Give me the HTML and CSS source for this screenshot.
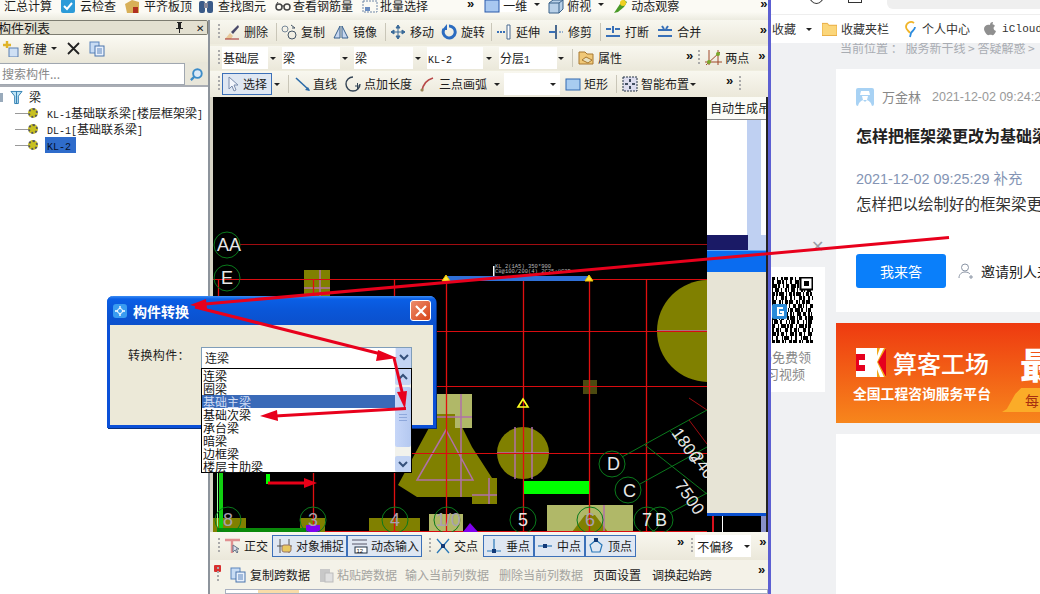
FILE: index.html
```html
<!DOCTYPE html>
<html lang="zh-CN">
<head>
<meta charset="utf-8">
<title>构件转换</title>
<link rel="stylesheet" href="styles.css">
</head>
<body>
<div class="page">
  <div class="app">
    <div class="menubar">
      <span class="mi a1">汇总计算</span>
      <span class="mi a2"><svg viewBox="0 0 16 16"><rect x="1" y="1" width="14" height="14" rx="2" fill="#2c9bd8"/><path d="M4 8l3 3 5-6" stroke="#fff" stroke-width="2" fill="none"/></svg>云检查</span>
      <span class="mi a3"><svg viewBox="0 0 16 16"><path d="M1 6l7-4 7 2v11H3z" fill="#d8b058"/><rect x="9" y="9" width="5" height="6" fill="#b03020"/></svg>平齐板顶</span>
      <span class="mi a3b"><svg viewBox="0 0 16 16"><rect x="1" y="3" width="6" height="12" rx="2" fill="#3a5a88"/><rect x="9" y="3" width="6" height="12" rx="2" fill="#3a5a88"/><rect x="6" y="5" width="4" height="5" fill="#889"/></svg>查找图元</span>
      <span class="mi a4"><svg viewBox="0 0 16 16"><circle cx="4" cy="9" r="3" fill="none" stroke="#444" stroke-width="1.5"/><circle cx="12" cy="9" r="3" fill="none" stroke="#444" stroke-width="1.5"/><path d="M7 8h2M1 7l2-3" stroke="#444"/></svg>查看钢筋量</span>
      <span class="mi a5"><svg viewBox="0 0 16 16"><path d="M1 3h14v11H1z" fill="none" stroke="#7088a8" stroke-dasharray="2 1"/><rect x="3" y="9" width="5" height="4" fill="#6a8cc0"/></svg>批量选择</span>
      <span class="mi more a6">»</span>
      <span class="mi a7 combo-top"><svg viewBox="0 0 16 16"><rect x="1" y="2" width="14" height="12" fill="#a8c8f0" stroke="#2858a8"/></svg>一维</span>
      <span class="caret a8"></span>
      <span class="mi a9"><svg viewBox="0 0 16 16"><path d="M1 5l4-3h10v9l-4 4H1z" fill="#b8d0e8" stroke="#386088"/><path d="M1 5h10v10M11 5l4-3" stroke="#386088" fill="none"/></svg>俯视</span>
      <span class="caret a10"></span>
      <span class="mi a11"><svg viewBox="0 0 16 16"><path d="M2 15L8 6l4-4 3 2-3 5-6 5z" fill="#4a9a28"/><circle cx="11" cy="5" r="3" fill="#f0d020"/></svg>动态观察</span>
      <span class="mi more a12">»</span>
    </div>
    <div class="work">
      <aside class="side">
        <div class="side-head"><span class="side-title">构件列表</span><span class="pin"><svg viewBox="0 0 9 11"><path d="M2 0h5v1H6v5h2v1H5v4H4V7H1V6h2V1H2z" fill="#222"/></svg></span><span class="x">✕</span></div>
        <div class="side-tools">
          <svg class="i16" viewBox="0 0 16 16"><rect x="6" y="7" width="9" height="9" fill="#cfe0f4" stroke="#5a7fb0"/><path d="M4 0v7M0 4h8" stroke="#e0b428" stroke-width="2.4"/></svg>
          <span class="new">新建</span><span class="caret"></span>
          <svg class="del" viewBox="0 0 13 13"><path d="M1 1l11 11M12 1L1 12" stroke="#222" stroke-width="1.8"/></svg>
          <svg class="i16" viewBox="0 0 16 16"><rect x="1" y="1" width="9" height="11" fill="#c8dcf4" stroke="#5a84bc"/><rect x="6" y="5" width="9" height="10" fill="#e8f0fc" stroke="#4a74ac"/><path d="M8 8h5M8 10h5M8 12h5" stroke="#5a84bc"/></svg>
        </div>
        <div class="search">
          <div class="search-input">搜索构件...</div>
          <div class="search-btn"><svg viewBox="0 0 16 16"><circle cx="9" cy="7" r="4.6" fill="#dbeaf8" stroke="#3c8cc8" stroke-width="2"/><path d="M5.5 10.5L2 14" stroke="#3c8cc8" stroke-width="2.4"/></svg></div>
        </div>
        <ul class="tree">
          <li class="root"><span class="expander"></span><svg viewBox="0 0 14 15"><path d="M1 1h12L9 6v8H5V6z" fill="#bfe4f4" stroke="#2c7cb0"/><path d="M7 1v13" stroke="#2c7cb0"/></svg>梁</li>
          <li class="leaf"><span class="gear"></span><span class="lab"><span class="m">KL-1</span>基础联系梁<span class="m">[</span>楼层框架梁<span class="m">]</span></span></li>
          <li class="leaf"><span class="gear"></span><span class="lab"><span class="m">DL-1[</span>基础联系梁<span class="m">]</span></span></li>
          <li class="leaf"><span class="gear"></span><span class="lab sel"><span class="m">KL-2</span></span></li>
        </ul>
      </aside>
      <main class="main">
        <div class="tb r1">
          <span class="grip"></span>
          <span class="tool"><svg viewBox="0 0 16 16"><path d="M1 15l5-6 3 3-2 3z" fill="#e8c898"/><path d="M7 8l7-7 1 2-6 7z" fill="#484868"/><path d="M1 15h14" stroke="#a02828"/></svg>删除</span>
          <span class="sep"></span>
          <span class="tool"><svg viewBox="0 0 16 16"><circle cx="4" cy="5" r="3" fill="none" stroke="#789"/><circle cx="11" cy="11" r="4" fill="none" stroke="#456"/><path d="M10 1l4 3M14 4h-3" stroke="#456" fill="none"/></svg>复制</span>
          <span class="tool"><svg viewBox="0 0 16 16"><path d="M7 2L1 14h6zM9 2l6 12H9z" fill="#c8d8f0" stroke="#38608c"/></svg>镜像</span>
          <span class="sep"></span>
          <span class="tool"><svg viewBox="0 0 16 16"><path d="M8 1v14M1 8h14M8 1L6 4h4zM8 15l-2-3h4zM1 8l3-2v4zM15 8l-3-2v4z" fill="#3a6a98" stroke="#3a6a98"/></svg>移动</span>
          <span class="tool t7"><svg viewBox="0 0 16 16"><path d="M8 2a6 6 0 1 1-5 3" fill="none" stroke="#2c6cc0" stroke-width="3"/><path d="M6 0v6H1z" fill="#2c6cc0"/></svg>旋转</span>
          <span class="sep"></span>
          <span class="tool"><svg viewBox="0 0 16 16"><path d="M1 8h8" stroke="#3870b8" stroke-dasharray="2 1" stroke-width="2"/><path d="M11 1h3v14h-3z" fill="#fff" stroke="#4a6a90"/></svg>延伸</span>
          <span class="tool"><svg viewBox="0 0 16 16"><path d="M1 8h7" stroke="#3870b8" stroke-width="2"/><path d="M8 1v14" stroke="#4a6a90" stroke-width="2"/><path d="M11 8h4" stroke="#3870b8" stroke-dasharray="2 1"/></svg>修剪</span>
          <span class="sep"></span>
          <span class="tool"><svg viewBox="0 0 16 16"><path d="M1 5h5M10 5h5M1 12h14M8 2v7" stroke="#3870b8" stroke-width="2" fill="none"/></svg>打断</span>
          <span class="tool"><svg viewBox="0 0 16 16"><path d="M1 6h14M1 12h14M5 2l2 3M11 2L9 5" stroke="#3870b8" stroke-width="2" fill="none"/></svg>合并</span>
          <span class="more push">»</span>
        </div>
        <div class="tb r2">
          <span class="grip"></span>
          <span class="combo w46">基础层</span><span class="caret c2"></span>
          <span class="combo w58">梁</span><span class="caret c2"></span>
          <span class="combo w59">梁</span><span class="caret c2"></span>
          <span class="combo w56b"><span class="m">KL-2</span></span><span class="caret c3"></span>
          <span class="combo w58">分层<span class="m">1</span></span><span class="caret c3b"></span>
          <span class="sep s2"></span>
          <span class="tool t2"><svg viewBox="0 0 17 16"><path d="M1 2h6l2 2h6v10H1z" fill="#f0c878" stroke="#a87830"/><path d="M4 10l4-3 6 3-4 3z" fill="#e8e0c0" stroke="#a87830"/></svg>属性</span>
          <span class="more m1">»</span>
          <span class="grip g2"></span>
          <span class="tool t2"><svg viewBox="0 0 17 16"><path d="M4 0v15M13 0v15M0 12h17M1 15L15 2" stroke="#a04828" fill="none"/><circle cx="4" cy="12" r="2" fill="#78a828"/><circle cx="13" cy="4" r="2" fill="#78a828"/></svg>两点</span>
          <span class="more m2">»</span>
        </div>
        <div class="tb r3">
          <span class="grip"></span>
          <span class="btn on sel-btn"><svg viewBox="0 0 10 16"><path d="M1 1v12l3-3 2 5 2-1-2-5h4z" fill="#f4f6fc" stroke="#7a8cac"/></svg>选择</span><span class="caret c4"></span>
          <span class="sep s3"></span>
          <span class="tool t3"><svg viewBox="0 0 16 16"><path d="M1 2l13 12" stroke="#2a6aa8" stroke-width="1.6"/><path d="M15 15l-5-1 3-3z" fill="#2a6aa8"/></svg>直线</span>
          <span class="tool t4"><svg viewBox="0 0 16 16"><path d="M8 1a7 7 0 1 0 7 7" fill="none" stroke="#345" stroke-width="1.4"/><path d="M10 10h5M12.500 7v6" stroke="#345"/></svg>点加长度</span>
          <span class="tool t5"><svg viewBox="0 0 14 16"><path d="M2 15C3 8 6 4 13 2" fill="none" stroke="#b84848" stroke-width="1.8"/><circle cx="2" cy="14" r="1.600" fill="#985"/></svg>三点画弧</span>
          <span class="caret c5"></span>
          <span class="combo w56"></span><span class="caret c6"></span>
          <span class="tool t6"><svg viewBox="0 0 16 16"><rect x="1" y="3" width="14" height="11" fill="#a8ccf0" stroke="#3068b0"/></svg>矩形</span>
          <span class="sep s4"></span>
          <span class="tool t6b"><svg viewBox="0 0 16 16"><rect x="1" y="1" width="14" height="14" fill="#dde" stroke="#234" stroke-dasharray="2 1"/><path d="M8 3v3M8 10v3M3 8h3M10 8h3" stroke="#123" stroke-width="1.6"/></svg>智能布置</span>
          <span class="caret c7"></span>
          <span class="more m3">»</span>
          <span class="grip g3"></span>
        </div>
        <div class="stage">
          <svg class="cad" viewBox="213 97 494 435" xmlns="http://www.w3.org/2000/svg">
            <rect x="213" y="97" width="494" height="435" fill="#000"/>
            <g class="olive">
              <rect x="304" y="270" width="26" height="26"/>
              <circle cx="708" cy="331" r="51"/>
              <circle cx="523" cy="453" r="26"/>
              <path d="M398 485l39-72h18l17 34 20 31-20 19h-55z"/>
              <rect x="472" y="478" width="25" height="26"/>
              <rect x="369" y="518" width="51" height="14"/>
              <rect x="213" y="518" width="33" height="14"/>
              <rect x="300" y="518" width="25" height="14"/>
            </g>
            <rect x="583" y="380" width="14" height="14" fill="#4c4a10"/>
            <g class="pale">
              <rect x="436" y="394" width="36" height="20"/>
              <rect x="455" y="413" width="17" height="15"/>
              <rect x="429" y="514" width="34" height="18"/>
              <rect x="547" y="505" width="86" height="27"/>
            </g>
            <path d="M572 532l13-17h10l13 17z" fill="#808000"/>
            <g class="pink">
              <path d="M304 288h26M320 270v26M657 331h50M515 427v52M532 427v52M497 453h52"/>
              <path d="M446 430l-29 50h56zM461 394v103M437 417h35M489 478v26M472 495h25M604 505v27"/>
            </g>
            <g class="grid-red">
              <path d="M240 244.500h467" class="dim"/>
              <path d="M213 279.500h494M437 331.500h270M437 386.500h270M410 453.500h297M325 531.500h382"/>
              <path class="vert" d="M218.500 279v18M313.500 279v18M394.500 279v18M446.500 279v253M523.500 279v253M589.500 279v253M646.500 279v253M313.500 470v62M394.500 470v62"/>
              <path d="M707 410l-18-12M689 420l18 24" class="dim"/>
            </g>
            <rect x="447" y="276" width="142" height="5" fill="#2f70d8"/>
            <rect x="493" y="266" width="1.500" height="10" fill="#fff"/>
            <text class="tiny" x="495" y="268">KL 2(1A5) 350*900</text>
            <text class="tiny" x="495" y="273">C8@100/200(4) 2C25;8C25</text>
            <path d="M446 275l4 6h-8zM589 275l4 6h-8z" fill="#ffe838" stroke="#f0c000"/>
            <path d="M523 399l5 8h-10z" fill="none" stroke="#ffff20" stroke-width="1.600"/>
            <rect x="524" y="481" width="65" height="13" fill="#00ff00"/>
            <rect x="217" y="470" width="1" height="62" fill="#a0ffa0"/>
            <rect x="219" y="470" width="4" height="62" fill="#10d010"/>
            <rect x="217" y="528" width="90" height="4" fill="#0a8a0a"/>
            <rect x="266" y="474" width="4" height="10" fill="#00ff00"/>
            <path d="M268 481.500h36v-3.500l13 5-13 5v-3.500h-36z" fill="#e80018"/>
            <rect x="306" y="525" width="14" height="7" fill="#8000f0"/>
            <path d="M463 532l7-9 8 9z" fill="#8000f0"/>
            <g class="axis">
              <circle cx="227" cy="245" r="13"/><circle cx="227" cy="278" r="13"/>
              <circle cx="228" cy="520" r="13"/><circle cx="313" cy="520" r="13"/>
              <circle cx="395" cy="520" r="13"/><circle cx="447" cy="520" r="13"/>
              <circle cx="523" cy="520" r="13"/><circle cx="590" cy="520" r="13"/>
              <circle cx="647" cy="520" r="13"/><circle cx="660" cy="520" r="13"/>
              <circle cx="612" cy="464" r="13"/><circle cx="628" cy="490" r="13"/>
              <path d="M622 457l85-47M640 484l67-37M670 513l37-20M645 445l62 49M670 431l37 34"/>
            </g>
            <g class="ax-txt">
              <text x="217" y="251">AA</text><text x="221" y="284">E</text>
              <text x="607" y="470">D</text><text x="623" y="497">C</text>
              <text x="518" y="526">5</text><text x="655" y="526">B</text><text x="642" y="526">7</text>
            </g>
            <g class="ax-txt dimmed">
              <text x="223" y="526">8</text><text x="308" y="526">3</text><text x="390" y="526">4</text>
              <text x="436" y="526">1/0</text><text x="585" y="526">6</text>
            </g>
            <g class="ax-txt rot">
              <text transform="translate(671 433) rotate(55)">1800</text>
              <text transform="translate(690 457) rotate(55)">2400</text>
              <text transform="translate(674 485) rotate(55)">7500</text>
            </g>
          </svg>
          <div class="dock">
            <div class="dock-head">自动生成吊</div>
            <div class="dock-list"><div class="dock-scroll"></div></div>
            <div class="dock-navy"></div>
            <div class="dock-title"></div>
            <div class="dock-body"></div>
            <div class="dock-foot"></div>
          </div>
        </div>
        <div class="tb r4">
          <span class="grip"></span>
          <span class="tool t8"><svg viewBox="0 0 17 16"><path d="M1 2h15M8 2v13" stroke="#e09090" stroke-width="2.4"/><path d="M9 7v7l2-2 2 3 1-1-2-3h3z" fill="#dde" stroke="#678"/></svg>正交</span>
          <span class="btn on b75"><svg viewBox="0 0 17 16"><path d="M4 1v14M13 1v14M1 8h15" stroke="#555" fill="none"/><rect x="6" y="7" width="9" height="7" rx="2" fill="#e8c860" stroke="#976"/></svg>对象捕捉</span>
          <span class="btn on b75"><svg viewBox="0 0 17 16"><path d="M1 2h15M1 6h15" stroke="#556"/><rect x="4" y="9" width="12" height="6" fill="#fff" stroke="#234"/><text x="5.500" y="14.500" class="mini">12</text></svg>动态输入</span>
          <span class="grip g4"></span>
          <span class="tool t9"><svg viewBox="0 0 16 16"><path d="M2 1l12 14M14 1L2 15" stroke="#2a78b8" stroke-width="1.3"/><rect x="6" y="6" width="4" height="4" fill="#123a78"/></svg>交点</span>
          <span class="btn on b51"><svg viewBox="0 0 16 16"><path d="M1 13h14M8 1v12" stroke="#2a78b8" stroke-width="1.200"/><rect x="6" y="11" width="4" height="4" fill="#123a78"/></svg>垂点</span>
          <span class="btn on b51"><svg viewBox="0 0 16 16"><path d="M1 8h14" stroke="#2a78b8" stroke-width="1.200"/><rect x="6" y="6" width="4" height="4" fill="#123a78"/></svg>中点</span>
          <span class="btn on b51"><svg viewBox="0 0 16 16"><path d="M8 2l6 5-2 7H4L2 7z" fill="none" stroke="#2a78b8" stroke-width="1.200"/><rect x="6" y="0" width="4" height="4" fill="#123a78"/></svg>顶点</span>
          <span class="more m4">»</span>
          <span class="grip g5"></span>
          <span class="combo w56c">不偏移<span class="caret c8"></span></span>
          <span class="more m5">»</span>
        </div>
        <div class="bottom">
          <div class="bt">
            <span class="close-mini"></span>
            <span class="grip g6"></span>
            <span class="tool t10"><svg viewBox="0 0 16 16"><rect x="1" y="1" width="9" height="11" fill="#c8dcf4" stroke="#5a84bc"/><rect x="6" y="5" width="9" height="10" fill="#e8f0fc" stroke="#4a74ac"/><path d="M8 8h5M8 10h5M8 12h5" stroke="#5a84bc"/></svg>复制跨数据</span>
            <span class="tool off t11"><svg viewBox="0 0 16 16"><rect x="2" y="2" width="10" height="13" fill="#c8c8c8"/><rect x="7" y="6" width="8" height="9" fill="#e0e0e0" stroke="#bbb"/></svg>粘贴跨数据</span>
            <span class="tool off t12">输入当前列数据</span>
            <span class="tool off t12">删除当前列数据</span>
            <span class="tool t12c">页面设置</span>
            <span class="tool t12b">调换起始跨</span>
            <span class="more m6">»</span>
          </div>
          <div class="sheet"><span class="sheet-cell"></span></div>
        </div>
      </main>
    </div>
  </div>
  <div class="divider"></div>
  <section class="browser">
    <div class="chrome">
      <span class="round"></span><span class="square"></span><span class="tabstrip"></span>
    </div>
    <div class="bookmarks">
      <span class="bm b1">收藏</span><span class="caret c9"></span>
      <span class="bm b2"><svg viewBox="0 0 16 14"><path d="M0 1h6l1 2h9v11H0z" fill="#fbd67a" stroke="#e8a838"/></svg>收藏夹栏</span>
      <span class="bm b3"><svg viewBox="0 0 12 18"><path d="M10 3a5 5 0 0 0-8 4c0 3 3 4 4 6" fill="none" stroke="#f0b428" stroke-width="1.800"/><path d="M11 7c0 3-3 4-4 6l-1 4" fill="none" stroke="#2c8ce0" stroke-width="1.800"/></svg>个人中心</span>
      <span class="bm b4"><svg viewBox="0 0 12 14"><path d="M6 3c1-1 4-1 5 1-2 1-2 4 1 5-1 3-3 5-4 4-1-.5-2-.5-3 0C3 14 0 9 0 7c0-3 3-5 6-4zM6 3c0-2 1-3 3-3 0 2-1 3-3 3z" fill="#8f8f8f"/></svg><span class="m">iCloud</span></span>
    </div>
    <div class="columns">
      <div class="rail">
        <span class="rail-x">✕</span>
        <div class="qr-card">
          <svg class="qr" viewBox="0 0 41 66">
            <g class="qr-rows">
              <path d="M0 1H30" stroke-dasharray="3 2 1 3 2 1 4 2"/><path d="M0 5H30" stroke-dasharray="2 3 4 1 2 2 1 3"/>
              <path d="M0 9H41" stroke-dasharray="5 1 2 3 1 2 3 2"/><path d="M0 13H41" stroke-dasharray="1 2 4 2 1 3 2 1"/>
              <path d="M0 17H41" stroke-dasharray="3 1 2 1 5 2 1 2"/><path d="M0 21H41" stroke-dasharray="2 2 1 4 3 1 2 3"/>
              <path d="M0 25H41" stroke-dasharray="4 3 2 1 1 2 3 1"/><path d="M0 29H41" stroke-dasharray="1 3 3 2 4 1 1 2"/>
              <path d="M0 33H41" stroke-dasharray="3 2 5 1 2 3 1 1"/><path d="M0 37H41" stroke-dasharray="2 1 1 3 4 2 3 2"/>
              <path d="M0 41H41" stroke-dasharray="5 2 1 1 3 3 2 1"/><path d="M0 45H41" stroke-dasharray="1 1 4 2 2 4 1 2"/>
              <path d="M0 49H41" stroke-dasharray="3 3 1 2 5 1 2 1"/><path d="M0 53H41" stroke-dasharray="2 2 3 1 1 4 3 2"/>
              <path d="M0 57H41" stroke-dasharray="4 1 2 2 3 2 1 3"/><path d="M0 61H41" stroke-dasharray="1 3 2 4 1 1 5 2"/>
              <path d="M0 65H41" stroke-dasharray="3 1 4 2 2 1 1 3"/>
            </g>
            <rect x="28.500" y="0.500" width="12" height="12" fill="#fff" stroke="#000" stroke-width="2"/><rect x="32" y="4" width="5" height="5"/>
            <rect x="0" y="27" width="15" height="15" rx="2" fill="#2a8ad8"/>
            <path d="M11 31H6v7h5v-3H8" fill="none" stroke="#fff" stroke-width="2"/>
          </svg>
          <div class="qr-text"><span>扫码免费领</span><span class="qr-second">学习视频</span></div>
        </div>
      </div>
      <div class="content">
        <div class="crumb">当前位置 ： 服务新干线 &gt; 答疑解惑 &gt;</div>
        <article class="card">
          <div class="who">
            <svg viewBox="0 0 18 18"><rect width="18" height="18" rx="2" fill="#a8d2f4"/><path d="M5 3h8l1 4H4zM6 8h6l-1 4H7zM2 18c1-4 3-5 5-6l2 2 2-2c2 1 4 2 5 6z" fill="#fff"/></svg>
            <span class="name">万金林</span><span class="stamp">2021-12-02 09:24:29</span>
          </div>
          <h1>怎样把框架梁更改为基础梁</h1>
          <div class="extra">2021-12-02 09:25:29 补充</div>
          <p>怎样把以绘制好的框架梁更改为基础梁</p>
          <div class="acts">
            <button class="answer">我来答</button>
            <svg class="invite-i" viewBox="0 0 16 16"><circle cx="7" cy="4.500" r="3.500" fill="none" stroke="#8a94a4"/><path d="M1 15c0-4 3-6 6-6s4 1 5 2M11 14h4M13 12v4" fill="none" stroke="#8a94a4"/></svg>
            <span class="invite">邀请别人来答</span>
          </div>
        </article>
        <div class="banner">
          <div class="logo-row">
            <svg class="logo" viewBox="0 0 30 29"><rect width="30" height="29" fill="#e6001e"/><path d="M16 0h14L22 14l8 15H16z" fill="#f2a818"/><path d="M0 0h15v29H0v-6h9v-6H3v-5h6V6H0zM15 0h6v29h-6zM21 14L28 0h-4l-3 8zM21 14l7 15h-4l-3-8z" fill="#fff"/></svg>
            <span class="brand">算客工场</span>
          </div>
          <div class="slogan">全国工程咨询服务平台</div>
          <span class="big">最</span>
          <span class="pill">每</span>
        </div>
        <div class="lower"></div>
      </div>
    </div>
  </section>
</div>

<div class="dialog">
  <div class="dlg-title">
    <svg viewBox="0 0 14 14"><rect width="14" height="14" rx="3" fill="#3a9cf0"/><path d="M7 2v10M2 7h10" stroke="#fff" stroke-width="1.400"/><circle cx="7" cy="7" r="2.500" fill="#3a9cf0" stroke="#fff"/></svg>
    <span>构件转换</span>
    <span class="dlg-close"><svg viewBox="0 0 12 12"><path d="M1 1l10 10M11 1L1 11" stroke="#fff" stroke-width="2.200"/></svg></span>
  </div>
  <div class="dlg-body">
    <span class="dlg-label">转换构件：</span>
    <div class="dlg-combo">连梁<span class="dlg-arrow"><svg viewBox="0 0 10 8"><path d="M1 1l4 4 4-4" fill="none" stroke="#35507a" stroke-width="2"/></svg></span></div>
  </div>
  <div class="dd">
    <ul class="dd-list">
      <li>连梁</li><li>圈梁</li><li class="hi">基础主梁</li><li>基础次梁</li><li>承台梁</li><li>暗梁</li><li>边框梁</li><li>楼层主肋梁</li>
    </ul>
    <div class="dd-scroll">
      <span class="dd-btn"><svg viewBox="0 0 10 8"><path d="M1 6l4-4 4 4" fill="none" stroke="#35507a" stroke-width="2"/></svg></span>
      <span class="dd-thumb"></span>
      <span class="dd-btn end"><svg viewBox="0 0 10 8"><path d="M1 2l4 4 4-4" fill="none" stroke="#35507a" stroke-width="2"/></svg></span>
    </div>
  </div>
</div>

<svg class="arrows" viewBox="0 0 1040 594" xmlns="http://www.w3.org/2000/svg">
  <path d="M949 237.500L205 304" stroke="#e8001c" stroke-width="3" fill="none"/>
  <path d="M190 305l16-6 1 10z" fill="#e8001c"/>
  <path d="M195 307L385 355" stroke="#e8001c" stroke-width="3" fill="none"/>
  <path d="M397 358l-19-8-2 11z" fill="#e8001c"/>
  <path d="M394 358l9 38" stroke="#e8001c" stroke-width="3" fill="none"/>
  <path d="M405 409l-8-17 10-1z" fill="#e8001c"/>
  <path d="M406 408.500L275 416" stroke="#e8001c" stroke-width="3" fill="none"/>
  <path d="M260 416l17-6 1 11z" fill="#e8001c"/>
</svg>
</body>
</html>
```

FILE: styles.css
```css
* { box-sizing: border-box; }
html, body { margin: 0; padding: 0; width: 1040px; height: 594px; overflow: hidden; background: #fff; }
body { position: relative; font: 12px/16px "Noto Sans CJK SC", "Liberation Sans", sans-serif; color: #1c1c1c; }
ul { list-style: none; margin: 0; padding: 0; }
.m { font-family: "Liberation Mono", monospace; font-size: 10px; }

.page { display: flex; width: 1040px; height: 594px; }
.app { width: 768px; height: 594px; display: flex; flex-direction: column; background: #efeddf; }
.divider { width: 3px; background: #5c5fd2; }
.browser { width: 269px; height: 594px; display: flex; flex-direction: column; background: #f0f1f3; overflow: hidden; }

/* menu strip */
.menubar { height: 20px; flex: none; display: flex; align-items: flex-start; background: linear-gradient(#fbfaf4 60%, #ecebe0); padding-left: 4px; overflow: hidden; }
.mi { display: flex; align-items: center; gap: 4px; height: 12px; line-height: 12px; white-space: nowrap; flex: none; }
.mi svg { width: 16px; height: 16px; flex: none; }
.a1 { margin-right: 8px; }
.a2 { margin-right: 8px; }
.a3 { margin-right: 6px; }
.a3b { margin-right: 9px; }
.a4 { gap: 2px; margin-right: 9px; }
.a5 { gap: 2px; margin-right: 39px; }
.a6 { margin-right: 10px; }
.a7 { background: #fff; width: 46px; gap: 3px; }
.a8 { margin: 3px 8px 0 4px; }
.a9 { margin-right: 7px; gap: 3px; }
.a10 { margin: 3px 8px 0 0; }
.a11 { gap: 3px; }
.a12 { margin-left: 81px; }
.more { font: bold 13px/13px "Liberation Sans", sans-serif; color: #111; flex: none; align-self: flex-start; margin-top: 3px; }
.mi.more { margin-top: -3px; }

.caret { width: 0; height: 0; border: 3px solid transparent; border-top: 3px solid #222; border-bottom: 0; flex: none; display: inline-block; }

/* work area */
.work { flex: 1; display: flex; min-height: 0; }
.side { width: 210px; flex: none; background: #fff; border-right: 2px solid #8d949c; display: flex; flex-direction: column; }
.side-head { height: 15px; flex: none; display: flex; align-items: center; background: #e3e0d0; border: 1px solid #7d7c70; border-left: 0; border-radius: 0 2px 2px 0; overflow: hidden; }
.side-title { margin-left: -2px; font-size: 13px; }
.pin { margin-left: auto; display: flex; }
.pin svg { width: 9px; height: 11px; }
.x { margin: 0 3px 0 12px; font-size: 10px; line-height: 12px; }
.side-tools { height: 27px; flex: none; display: flex; align-items: center; padding-left: 3px; background: linear-gradient(#fbfaf3, #ebe8da); }
.i16 { width: 16px; height: 16px; flex: none; }
.new { margin: 0 4px; font-size: 12px; }
.del { width: 13px; height: 13px; margin: 0 9px 0 10px; }
.search { height: 25px; flex: none; display: flex; padding-top: 1px; background: #e8e6da; border-bottom: 2px solid #a9adb4; }
.search-input { width: 185px; background: #fff; border: 1px solid #a0a7b0; border-left: 0; padding-left: 2px; line-height: 20px; color: #888; font-size: 12px; }
.search-btn { flex: 1; display: flex; align-items: center; justify-content: center; background: #e8e6da; }
.search-btn svg { width: 15px; height: 15px; }
.tree { padding-top: 2px; }
.tree li { display: flex; align-items: center; height: 16px; white-space: nowrap; }
.root { padding-left: 10px; gap: 6px; }
.root svg { width: 13px; height: 15px; }
.expander { width: 3px; height: 9px; margin-left: -10px; margin-right: 1px; background: #9ab; }
.leaf { background: linear-gradient(#999, #999) 15px 50%/14px 1px no-repeat; }
.gear { width: 10px; height: 10px; margin-left: 28px; border-radius: 50%; background: #c8c020; border: 2px dotted #555; flex: none; }
.lab { margin-left: 9px; height: 16px; line-height: 16px; font-size: 12px; }
.lab.sel { background: #2f6ccb; width: 31px; color: #06102a; padding-left: 2px; margin-left: 7px; }

/* main */
.main { flex: 1; min-width: 0; display: flex; flex-direction: column; }
.tb { display: flex; align-items: center; flex: none; padding-left: 8px; white-space: nowrap; background: linear-gradient(#f8f7ef, #ebe8da); }
.r1 { height: 24px; margin-bottom: 2px; }
.r2 { height: 24px; margin-bottom: 1px; }
.r3 { height: 26px; }
.r4 { height: 28px; }
.grip { width: 2px; height: 16px; flex: none; margin: 0 4px 0 0; background: repeating-linear-gradient(#aaa 0 2px, transparent 2px 4px); }
.tool { display: flex; align-items: center; gap: 4px; margin-right: 8px; flex: none; }
.tool svg { width: 16px; height: 16px; flex: none; }
.sep { width: 1px; height: 18px; background: #c9c6b8; margin-right: 4px; flex: none; }
.t7 { margin-right: 6px; margin-left: -1px; }
.push { margin-left: auto; margin-right: 1px; }
.combo { height: 22px; line-height: 21px; background: #fff; padding-left: 1px; flex: none; }
.r2 .grip { margin-right: 0; }
.r2 .combo { margin-left: 2px; }
.w46 { width: 46px; }
.w58 { width: 58px; }
.w59 { width: 59px; }
.w56b { width: 56px; }
.c2 { margin: 0 4px 0 2px; }
.c3 { margin: 0 5px 0 3px; }
.c3b { margin-left: 1px; }
.s2 { margin: 0 5px 0 8px; }
.t2 { gap: 3px; margin-right: 0; }
.t2 svg { width: 17px; }
.m1 { margin-left: 64px; }
.r2 .g2 { margin: 0 5px; }
.m2 { margin-left: 9px; }
.r3 .grip { margin-right: 2px; }
.btn { display: flex; align-items: center; border: 1px solid #3c70b8; background: #dfe7f2; flex: none; }
.btn svg { flex: none; }
.sel-btn { width: 50px; height: 22px; padding-left: 5px; gap: 5px; }
.sel-btn svg { width: 10px; height: 16px; }
.c4 { margin: 0 8px 0 2px; }
.s3 { margin-right: 6px; }
.t3 { margin-right: 8px; gap: 2px; }
.t4 { margin-right: 8px; gap: 3px; }
.t5 { gap: 5px; margin-right: 7px; }
.t5 svg { width: 14px; }
.c5 { margin-right: 4px; }
.r3 .w56 { width: 56px; }
.c6 { margin: 0 9px 0 -10px; }
.t6 { margin-right: 8px; gap: 3px; }
.t6b { margin-right: 1px; gap: 3px; }
.s4 { margin-right: 5px; }
.m3 { margin-left: 30px; margin-right: 6px; }
.r3 .g3 { margin: 0; }

/* stage */
.stage { height: 435px; flex: none; display: flex; padding-left: 3px; background: #d8d5c6; }
.cad { width: 494px; height: 435px; flex: none; display: block; }
.olive { fill: #808000; }
.pale { fill: #b0b868; }
.pink { fill: none; stroke: #b070a8; stroke-width: 1.500; }
.grid-red { fill: none; stroke: #d80c10; stroke-width: 1; }
.grid-red .vert { stroke: #e01010; stroke-width: 1.300; }
.grid-red .dim { stroke: #a00c10; }
.axis { fill: none; stroke: #0a7a1c; stroke-width: 1; }
.tiny { font: 5.500px "Liberation Mono", monospace; fill: #b8b8b8; }
.ax-txt text { font: 18px "Liberation Sans", sans-serif; fill: #e8e8e8; }
.ax-txt.dimmed text { fill: #a8a0b0; }
.ax-txt.rot text { font-size: 17px; }
.mini { font: 6px "Liberation Sans", sans-serif; fill: #111; }
.dock { width: 61px; flex: none; display: flex; flex-direction: column; border-right: 2px solid #222; overflow: hidden; }
.dock-head { height: 23px; flex: none; background: #fbfbf6; border-bottom: 1px solid #888; padding-left: 3px; line-height: 21px; white-space: nowrap; overflow: hidden; }
.dock-list { height: 115px; flex: none; display: flex; justify-content: flex-end; background: #fff; padding-right: 5px; }
.dock-scroll { width: 14px; background: #bfd0f2; }
.dock-navy { height: 15px; flex: none; background: linear-gradient(90deg, #1a1a66 70%, #bfd0f2 70%); }
.dock-title { height: 22px; flex: none; background: linear-gradient(#62a8f8 0 1px, #0a6cf0 1px); }
.dock-body { height: 241px; flex: none; background: #e7e4d6; }
.dock-foot { flex: 1; background: linear-gradient(90deg, #000 5px, #d8101c 5px 7px, #000 7px 15px, #fff 15px 16px, #000 16px 54px, #8890c8 54px); border-top: 3px solid #0b50d0; }

/* lower docks */
.t8 { gap: 3px; margin-right: 4px; }
.t8 svg { width: 17px; }
.b75 { width: 75px; height: 22px; padding-left: 3px; gap: 3px; }
.b75 svg { width: 17px; height: 16px; }
.r4 .g4 { margin: 0 4px 0 7px; }
.t9 { margin-right: 5px; gap: 3px; }
.b51 { width: 51px; height: 22px; padding-left: 2px; gap: 4px; }
.b51 svg { width: 16px; height: 16px; }
.m4 { margin-left: 41px; margin-right: 7px; }
.r4 .g5 { margin-right: 2px; }
.w56c { width: 56px; display: flex; align-items: center; padding-left: 2px; }
.c8 { margin-left: 11px; }
.m5 { margin-left: 8px; }
.bottom { flex: 1; min-height: 0; display: flex; flex-direction: column; background: #f4f2e8; }
.bt { height: 29px; flex: none; display: flex; align-items: center; padding-left: 4px; white-space: nowrap; }
.close-mini { width: 7px; height: 7px; background: #d83030; border-radius: 1px; flex: none; align-self: flex-start; margin-top: 5px; }
.g6 { margin: 0 11px 0 -4px; }
.t10 { margin-right: 8px; }
.t11 { gap: 3px; }
.off { color: #a4a4a0; }
.t12 { margin-right: 10px; }
.t12c { margin-right: 11px; }
.t12b { margin-right: 0; }
.m6 { margin-left: 46px; }
.sheet { flex: 1; margin-left: 15px; background: #fff; border: 1px solid #a8b0c0; padding-left: 32px; }
.sheet-cell { display: block; width: 41px; height: 100%; background: #f8dca8; }

/* browser */
.chrome { height: 15px; flex: none; background: #fff; position: relative; overflow: hidden; border-bottom: 1px solid #eee; }
.round { position: absolute; left: 38px; top: -14px; width: 15px; height: 18px; border: 1px solid #333; border-radius: 50%; }
.square { position: absolute; left: 77px; top: -8px; width: 14px; height: 11px; border: 1px solid #333; }
.tabstrip { position: absolute; left: 116px; top: 0; right: 0; height: 9px; background: #efefef; border-radius: 0 0 0 6px; }
.bookmarks { height: 28px; flex: none; display: flex; align-items: center; background: #fff; white-space: nowrap; overflow: hidden; }
.bm { display: flex; align-items: center; gap: 4px; color: #333; flex: none; }
.b1 { margin-left: 1px; }
.c9 { margin: 0 10px 0 10px; }
.b2 svg { width: 15px; height: 14px; }
.b2 { margin-right: 15px; }
.b3 svg { width: 12px; height: 18px; }
.b3 { gap: 6px; margin-right: 14px; }
.b4 svg { width: 12px; height: 14px; }
.b4 { gap: 6px; }
.b4 .m { font-size: 11px; letter-spacing: .1px; }
.columns { flex: 1; min-height: 0; display: flex; }
.rail { width: 65px; flex: none; display: flex; flex-direction: column; }
.rail-x { margin: 195px 0 0 40px; height: 14px; line-height: 14px; font-size: 16px; color: #9a9ea6; }
.qr-card { width: 54px; height: 125px; margin-top: 15px; background: #fff; overflow: hidden; }
.qr { width: 41px; height: 66px; margin: 10px 0 0 1px; display: block; }
.qr-rows { fill: none; stroke: #000; stroke-width: 4; }
.qr-text { margin-top: 5px; width: 40px; color: #888; font-size: 13px; line-height: 17px; display: flex; flex-direction: column; align-items: flex-end; white-space: nowrap; }
.qr-second { margin-right: 6px; }
.content { flex: 1; min-width: 0; display: flex; flex-direction: column; }
.crumb { height: 26px; flex: none; margin-left: 4px; font-size: 12px; line-height: 10px; color: #a8acb2; white-space: nowrap; overflow: hidden; }
.card { height: 243px; flex: none; background: #fff; padding: 19px 0 0 20px; overflow: hidden; white-space: nowrap; }
.who { display: flex; align-items: center; height: 18px; }
.who svg { width: 18px; height: 18px; flex: none; }
.name { margin-left: 8px; width: 50px; color: #888; font-size: 13px; flex: none; }
.stamp { color: #999; font: 12.500px "Liberation Sans", sans-serif; }
.card h1 { margin: 18px 0 0; font-size: 16px; line-height: 22px; font-weight: 700; color: #222; }
.extra { margin-top: 23px; font: 14.400px/20px "Liberation Sans", "Noto Sans CJK SC", sans-serif; color: #8494b4; }
.card p { margin: 4px 0 0; font-size: 15.500px; line-height: 20px; color: #333; }
.acts { display: flex; align-items: center; margin-top: 41px; }
.answer { width: 90px; height: 34px; border: 0; border-radius: 3px; background: #0a7ffa; color: #fff; font: 14px "Noto Sans CJK SC", sans-serif; flex: none; padding: 0; }
.invite-i { width: 16px; height: 16px; margin: 0 7px 0 12px; flex: none; }
.invite { font-size: 14px; color: #222; }
.banner { height: 100px; flex: none; margin-top: 11px; padding: 25px 0 0 20px; position: relative; background: linear-gradient(#ee3a10, #f7861c); overflow: hidden; }
.logo-row { display: flex; align-items: center; gap: 7px; height: 29px; }
.logo { width: 30px; height: 29px; flex: none; }
.brand { font-size: 24px; line-height: 29px; color: #fff; font-weight: 500; white-space: nowrap; }
.slogan { margin: 7px 0 0 -3px; font-size: 13.800px; line-height: 18px; color: #fff; font-weight: 700; white-space: nowrap; }
.big { position: absolute; left: 184px; top: 20px; font-size: 36px; line-height: 40px; font-weight: 900; color: #fff; }
.pill { position: absolute; left: 166px; top: 65px; width: 60px; height: 24px; padding-left: 23px; line-height: 24px; font-size: 14px; color: #a83010; background: #fbac28; clip-path: polygon(0 100%, 8% 88%, 22% 25%, 32% 0, 100% 0, 100% 100%); }
.lower { flex: 1; margin-top: 11px; background: #fff; }

/* dialog */
.dialog { position: absolute; left: 107px; top: 296px; width: 329px; height: 132px; border: 3px solid #0a50d8; border-top: 0; border-radius: 6px 6px 0 0; background: #ece9d8; box-shadow: 1px 1px 0 #07307e; }
.dlg-title { margin: 0 -3px; height: 29px; display: flex; align-items: center; padding-left: 6px; gap: 6px; border-radius: 6px 6px 0 0; background: linear-gradient(#3a8cf4 0, #0a5fe6 3px, #0a56d8 50%, #0b50cc); color: #fff; font-weight: 700; font-size: 14px; }
.dlg-title svg { width: 14px; height: 14px; flex: none; }
.dlg-close { margin-left: auto; margin-right: 5px; width: 21px; height: 21px; display: flex; align-items: center; justify-content: center; background: linear-gradient(135deg, #ec8c6c, #d84418); border: 1px solid #fff; border-radius: 3px; }
.dlg-close svg { width: 12px; height: 12px; }
.dlg-body { position: relative; padding: 22px 0 0 18px; height: 60px; }
.dlg-label { font-size: 12px; letter-spacing: .4px; }
.dlg-combo { position: absolute; left: 91px; top: 22px; width: 211px; height: 22px; background: #fff; border: 1px solid #7f9db9; padding-left: 3px; line-height: 20px; }
.dlg-arrow { position: absolute; right: 0; top: 0; width: 16px; height: 20px; display: flex; align-items: center; justify-content: center; background: #c3d4f4; border-left: 1px solid #e8eefc; }
.dlg-arrow svg, .dd-btn svg { width: 10px; height: 8px; }
.dd { position: absolute; left: 91px; top: 72px; width: 211px; height: 105px; background: #fff; border: 1px solid #000; display: flex; z-index: 2; }
.dd-list { flex: 1; }
.dd-list li { height: 13px; line-height: 13px; padding-left: 1px; color: #111; font-size: 12px; white-space: nowrap; }
.dd-list .hi { background: #3a6ab8; color: #cfdcf4; }
.dd-scroll { width: 16px; display: flex; flex-direction: column; background: #f2f2ec; }
.dd-btn { height: 16px; flex: none; display: flex; align-items: center; justify-content: center; background: #c3d4f4; border-radius: 2px; }
.dd-btn.end { margin-top: auto; }
.dd-thumb { height: 60px; margin-top: 2px; background: linear-gradient(#8ea8dc, #8ea8dc) center 27px/8px 1px no-repeat, linear-gradient(#8ea8dc, #8ea8dc) center 30px/8px 1px no-repeat, linear-gradient(#8ea8dc, #8ea8dc) center 33px/8px 1px no-repeat, linear-gradient(90deg, #c6d6f8, #b4c8f0); border-radius: 2px; }

.arrows { position: absolute; left: 0; top: 0; width: 1040px; height: 594px; pointer-events: none; z-index: 5; }
```
